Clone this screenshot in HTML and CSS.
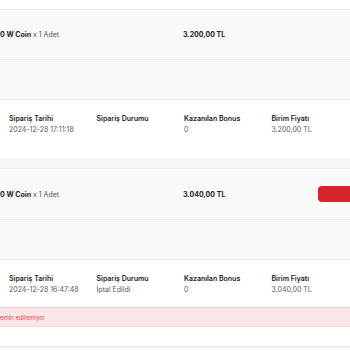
FILE: index.html
```html
<!DOCTYPE html>
<html lang="tr">

<head>
    <meta charset="UTF-8">
    <title>Siparişlerim</title>
    <link rel="stylesheet" href="styles.css">
</head>

<body>
    <div class="orders">
        <div class="order first">
            <div class="item">
                <div class="name"><b>0 W Coin</b> x 1 Adet</div>
                <div class="price">3.200,00 TL</div>
                <div class="action"></div>
            </div>
            <div class="spacer"></div>
            <div class="details">
                <div class="col">
                    <div class="label">Sipariş Tarihi</div>
                    <div class="value">2024-12-28 17:11:18</div>
                </div>
                <div class="col">
                    <div class="label">Sipariş Durumu</div>
                    <div class="value"></div>
                </div>
                <div class="col">
                    <div class="label">Kazanılan Bonus</div>
                    <div class="value">0</div>
                </div>
                <div class="col">
                    <div class="label">Birim Fiyatı</div>
                    <div class="value">3.200,00 TL</div>
                </div>
            </div>
        </div>
        <div class="order">
            <div class="item">
                <div class="name"><b>0 W Coin</b> x 1 Adet</div>
                <div class="price">3.040,00 TL</div>
                <div class="action"><span class="btn"></span></div>
            </div>
            <div class="spacer"></div>
            <div class="details tight">
                <div class="col">
                    <div class="label">Sipariş Tarihi</div>
                    <div class="value">2024-12-28 16:47:48</div>
                </div>
                <div class="col">
                    <div class="label">Sipariş Durumu</div>
                    <div class="value">İptal Edildi</div>
                </div>
                <div class="col">
                    <div class="label">Kazanılan Bonus</div>
                    <div class="value">0</div>
                </div>
                <div class="col">
                    <div class="label">Birim Fiyatı</div>
                    <div class="value">3.040,00 TL</div>
                </div>
            </div>
            <div class="alert">emin edilemiyor</div>
            <div class="foot"></div>
        </div>
    </div>
</body>

</html>
```

FILE: styles.css
```css
* {
    padding: 0;
    margin: 0;
    box-sizing: border-box;
}
body {
    background: #f6f6f6;
    font-family: Inter, "Noto Sans", sans-serif;
    font-size: 7px;
    color: #222;
    overflow: hidden;
}
.orders {
    display: flex;
    flex-direction: column;
    gap: 10px;
}
.order {
    background: #fff;
    border-top: 1px solid #ebebeb;
    border-bottom: 1px solid #ebebeb;
}
.order.first {
    border-top: 0;
    border-bottom: 0;
    padding-top: 9px;
}
.order.first .item {
    border-top: 1px solid #ebebeb;
}
.item {
    display: grid;
    grid-template-columns: 183px 135px 1fr;
    align-items: center;
    height: 51px;
    background: #f9f9f9;
    border-bottom: 1px solid #ebebeb;
}
.name {
    color: #555;
}
.name b {
    color: #222;
    font-weight: 700;
}
.price {
    font-weight: 700;
}
.btn {
    display: block;
    width: 60px;
    height: 16px;
    background: #d8232a;
    border-radius: 4px;
}
.spacer {
    height: 40px;
    background: #f9f9f9;
    border-bottom: 1px solid #ebebeb;
}
.details {
    display: grid;
    grid-template-columns: repeat(4, 87.5px);
    padding: 14px 9px 23px;
    background: #fff;
}
.details.tight {
    padding-bottom: 12px;
}
.label {
    font-weight: 600;
    line-height: 10px;
}
.value {
    color: #5a5a5a;
    line-height: 11px;
    min-height: 11px;
}
.alert {
    height: 20px;
    line-height: 19px;
    font-size: 6px;
    color: #e0454f;
    background: #fbe6e8;
    border-top: 1px solid #f6d3d6;
    border-bottom: 1px solid #f6d3d6;
}
.foot {
    height: 19px;
}
```
